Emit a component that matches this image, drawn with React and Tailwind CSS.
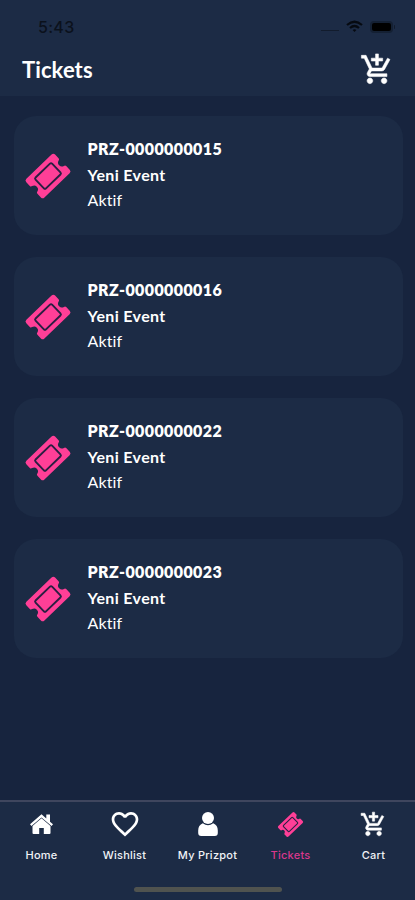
import React from 'react';
import { MdAddShoppingCart, MdFavoriteBorder } from 'react-icons/md';

const tickets = [
  { code: 'PRZ-0000000015', event: 'Yeni Event', status: 'Aktif' },
  { code: 'PRZ-0000000016', event: 'Yeni Event', status: 'Aktif' },
  { code: 'PRZ-0000000022', event: 'Yeni Event', status: 'Aktif' },
  { code: 'PRZ-0000000023', event: 'Yeni Event', status: 'Aktif' },
];

const TicketIcon = ({ className }) => (
  <svg viewBox="0 0 48 48" className={className} fill="none">
    <g transform="rotate(-44 24 24)">
      <path
        d="M6.500 11H41.500Q44 11 44 13.500V18.500Q44 20 42.500 20.200A3.900 3.900 0 0 0 42.500 27.800Q44 28 44 29.500V34.500Q44 37 41.500 37H6.500Q4 37 4 34.500V29.500Q4 28 5.500 27.800A3.900 3.900 0 0 0 5.500 20.200Q4 20 4 18.500V13.500Q4 11 6.500 11Z"
        fill="#ff3f97"
      />
      <rect x="12.500" y="16.500" width="23" height="15" rx="1.500" stroke="#2a1f42" strokeWidth="1.900" />
    </g>
  </svg>
);

const HomeIcon = ({ className }) => (
  <svg viewBox="0 0 25 22" className={className} fill="currentColor">
    <path d="M1 11.300L12.500 1.300L17.300 5.400V1.500H21V8.700L24 11.300L22.600 13L12.500 4.400L2.400 13Z" />
    <path d="M12.500 5.200L21.500 12.900V20Q21.500 21 20.500 21H14.800V15H10.200V21H4.500Q3.500 21 3.500 20V12.900Z" />
  </svg>
);

const PersonIcon = ({ className }) => (
  <svg viewBox="0 0 24 26" className={className} fill="currentColor">
    <path d="M6.800 12.200Q12 16.200 17.200 12.200Q21.800 14 21.800 19.500V22Q21.800 25 18.800 25H5.200Q2.200 25 2.200 22V19.500Q2.200 14 6.800 12.200Z" />
    <circle cx="12" cy="7" r="6" />
  </svg>
);

const StatusBar = () => (
  <div className="flex h-[42px] items-start justify-between pl-[38px] pr-[20px] pt-[18px] text-[#0b111c]">
    <span className="font-['Inter',sans-serif] text-[16px] font-medium leading-[19px] tracking-[0.3px]">5:43</span>
    <div className="flex items-center pt-[2px]">
      <div className="mr-[7px] mt-[8px] h-px w-[18px] bg-[#121c2d]" />
      <svg viewBox="0 0 17 13" className="mr-[7px] h-[13px] w-[17px]" fill="none" stroke="#060a11" strokeWidth="2.2">
        <path d="M1 5Q8.500 -1.500 16 5" />
        <path d="M4 8Q8.500 4 13 8" />
        <path d="M6.600 10Q8.500 8.600 10.400 10L8.500 12Z" fill="#060a11" stroke="none" />
      </svg>
      <div className="flex items-center">
        <div className="h-[12px] w-[23px] rounded-[4px] border-2 border-[#142033] bg-black" />
        <div className="ml-px h-1 w-px rounded-r bg-[#111b2b]" />
      </div>
    </div>
  </div>
);

const Header = () => (
  <header className="h-[96px] shrink-0 bg-[#1c2b45]">
    <StatusBar />
    <div className="flex items-start justify-between pl-[22px] pr-[22px]">
      <h1 className="pt-[14px] text-[22px] font-bold leading-7 tracking-[0.1px]">Tickets</h1>
      <MdAddShoppingCart className="mt-[10px] -mr-px h-[35px] w-[34px] stroke-current stroke-[0.4px] [&>path:first-child]:stroke-none" />
    </div>
  </header>
);

const TicketCard = ({ ticket }) => (
  <div className="flex h-[119px] rounded-[22px] bg-[#1c2b45] pl-[10px]">
    <TicketIcon className="mt-[36px] h-[48px] w-[48px] shrink-0" />
    <div className="ml-[15.5px] pt-[20px] text-[16px] leading-[25.6px] [font-variant-ligatures:none]">
      <p className="font-extrabold tracking-[0.38px]">{ticket.code}</p>
      <p className="font-bold tracking-[0.35px]">{ticket.event}</p>
      <p className="tracking-[0.15px]">{ticket.status}</p>
    </div>
  </div>
);

const NavItem = ({ label, active, children }) => (
  <div className={`flex flex-1 flex-col items-center ${active ? 'text-[#d9388d]' : 'text-[#f0f2f6]'}`}>
    <div className="flex h-[30px] items-center text-white">{children}</div>
    <span className="mt-[9px] whitespace-nowrap font-['Inter',sans-serif] text-[11px] font-medium leading-[14px] tracking-[0.25px]">
      {label}
    </span>
  </div>
);

export default function App() {
  return (
    <div className="flex h-[900px] w-[415px] flex-col overflow-hidden bg-[#17243e] font-['Lato',sans-serif] text-white">
      <Header />
      <main className="flex flex-1 flex-col gap-[22px] pl-[14px] pr-[12px] pt-[20px]">
        {tickets.map((ticket) => (
          <TicketCard key={ticket.code} ticket={ticket} />
        ))}
      </main>
      <nav className="flex h-[100px] shrink-0 flex-col border-t-2 border-[#3f465e] bg-[#1c2b45]">
        <div className="flex pt-[7px]">
          <NavItem label="Home">
            <HomeIcon className="h-[22px] w-[25px]" />
          </NavItem>
          <NavItem label="Wishlist">
            <MdFavoriteBorder className="h-[32px] w-[32px]" />
          </NavItem>
          <NavItem label="My Prizpot">
            <PersonIcon className="h-[26px] w-[24px]" />
          </NavItem>
          <NavItem label="Tickets" active>
            <TicketIcon className="h-[27px] w-[27px]" />
          </NavItem>
          <NavItem label="Cart">
            <MdAddShoppingCart className="h-[27px] w-[27px] stroke-current stroke-[0.5px] [&>path:first-child]:stroke-none" />
          </NavItem>
        </div>
        <div className="mx-auto mt-[25px] h-[5px] w-[148px] rounded-full bg-[#50534f]" />
      </nav>
    </div>
  );
}
